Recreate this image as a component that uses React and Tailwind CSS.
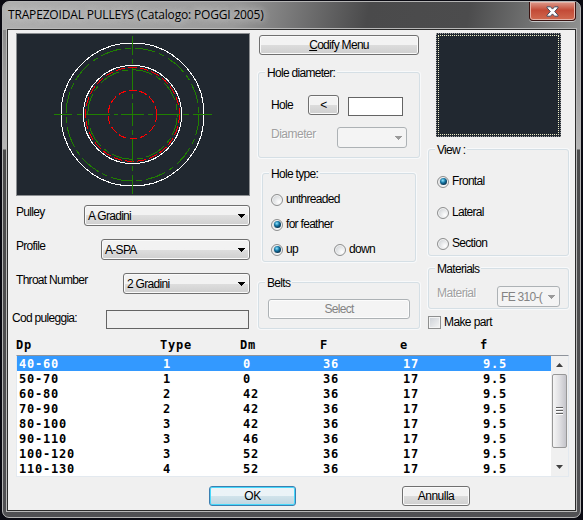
import { useState } from 'react';

const ROWS = [
  ['40-60', '1', '0', '36', '17', '9.5'],
  ['50-70', '1', '0', '36', '17', '9.5'],
  ['60-80', '2', '42', '36', '17', '9.5'],
  ['70-90', '2', '42', '36', '17', '9.5'],
  ['80-100', '3', '42', '36', '17', '9.5'],
  ['90-110', '3', '46', '36', '17', '9.5'],
  ['100-120', '3', '52', '36', '17', '9.5'],
  ['110-130', '4', '52', '36', '17', '9.5'],
];

const COLUMNS = 'grid grid-cols-[144px_80px_80px_80px_80px_1fr]';

const Group = ({ title, className, children }) => (
  <div className={`relative rounded-[3px] border border-[#d5dfe5] shadow-[0_0_0_1px_#f8f9fa] ${className}`}>
    <span className="absolute -top-[8px] left-[6px] bg-[#f0f0f0] px-[2px] leading-[17px]">{title}</span>
    {children}
  </div>
);

const Button = ({ className = '', disabled, primary, children }) => {
  let look =
    'border-[#707070] bg-linear-to-b from-[#f3f3f3] from-50% via-[#dddddd] via-50% to-[#cfcfcf] shadow-[inset_0_0_0_1px_#fafafa]';
  if (disabled) look = 'border-[#adb2b5] bg-[#f4f4f4] text-[#838383] shadow-[inset_0_0_0_1px_#fcfcfc]';
  if (primary) {
    look =
      'border-[#3c7fb1] bg-linear-to-b from-[#ebf3f7] from-50% via-[#d1e3eb] via-50% to-[#bfd6e1] shadow-[inset_0_0_0_1px_#46d8fb]';
  }
  return (
    <button
      disabled={disabled}
      className={`flex h-5 items-center justify-center rounded-[3px] border ${look} ${className}`}
    >
      {children}
    </button>
  );
};

const Select = ({ value, disabled, className }) => (
  <div
    className={`flex h-[21px] items-center justify-between rounded-[3px] border pr-1 pl-[3px] ${
      disabled
        ? 'border-[#adb2b5] bg-[#f4f4f4] text-[#838383]'
        : 'border-[#707070] bg-linear-to-b from-[#f2f2f2] from-50% via-[#dedede] via-50% to-[#cfcfcf] shadow-[inset_0_0_0_1px_#fafafa]'
    } ${className}`}
  >
    <span className="pt-px whitespace-nowrap">{value}</span>
    <svg width="7" height="4" viewBox="0 0 7 4" className="shrink-0" shapeRendering="crispEdges">
      <path d="M0 0h7L3.5 4z" fill={disabled ? '#9a9a9a' : '#000'} />
    </svg>
  </div>
);

const Radio = ({ label, checked, onChange, className = '' }) => (
  <label className={`flex h-[15px] items-center gap-[3px] ${className}`}>
    <input type="radio" checked={checked} onChange={onChange} className="sr-only" />
    <span className="flex size-3 items-center justify-center rounded-full border border-[#8e8f8f] bg-[radial-gradient(circle_at_70%_70%,#ffffff,#c4c8cc)] shadow-[inset_0_0_0_1px_#f4f4f4]">
      {checked && (
        <span className="size-[7px] rounded-full bg-[radial-gradient(circle_at_40%_35%,#7fd8f5_5%,#12719f_40%,#0a2f4a_75%)]" />
      )}
    </span>
    <span>{label}</span>
  </label>
);

const PulleyView = () => (
  <svg
    width="234"
    height="163"
    viewBox="16 33 234 163"
    fill="none"
    shapeRendering="crispEdges"
    className="bg-[#212830]"
  >
    <rect x="16.5" y="33.5" width="233" height="162" stroke="#8b8e91" />
    <circle cx="132.5" cy="114.5" r="71.5" stroke="#fff" />
    <circle cx="132.5" cy="114.5" r="66.5" stroke="#208000" strokeDasharray="21 4 6 4" />
    <circle cx="132.5" cy="114.5" r="44.7" stroke="#208000" strokeDasharray="21 4 6 4" />
    <circle cx="132.5" cy="114.5" r="49.1" stroke="#fff" />
    <circle cx="132.5" cy="114.5" r="46.9" stroke="#f00" strokeDasharray="9 3" />
    <circle cx="132.5" cy="114.5" r="24.3" stroke="#f00" strokeDasharray="8 3" />
    <path
      d="M54 114.5h18M77 114.5h5M86 114.5h24M114 114.5h4M121 114.5h23M148 114.5h5M157 114.5h23M183 114.5h6M193 114.5h19"
      stroke="#208000"
    />
    <path
      d="M132.5 36v19M132.5 59v5M132.5 68v22M132.5 94v5M132.5 103v23M132.5 130v5M132.5 139v23M132.5 166v5M132.5 175v19"
      stroke="#208000"
    />
  </svg>
);

const TitleBar = () => (
  <div className="flex h-[27px] justify-between">
    <h1 className="mt-[3px] ml-[2px] font-['Open_Sans','Noto_Sans',sans-serif] text-[12px] leading-[20px] tracking-[-0.17px] whitespace-nowrap text-black [text-shadow:0_0_6px_#ddd,0_0_10px_#bbb]">
      TRAPEZOIDAL PULLEYS (Catalogo: POGGI 2005)
    </h1>
    <button
      aria-label="Close"
      className="mr-px flex h-[19px] w-[47px] items-center justify-center rounded-b-[4px] border border-t-0 border-[#3a1210] bg-linear-to-b from-[#dc9a8c] from-0% via-[#c34a36] via-45% to-[#d06a50] shadow-[inset_0_0_0_1px_#e5b3a8,0_1px_0_#c8c8c8]"
    >
      <svg width="13" height="11" viewBox="0 0 13 11">
        <path
          d="M1 .8h3.5l2 2.3 2-2.3H12v1L8.7 5.5l3.3 3.7v1H8.500l-2-2.300-2 2.300H1v-1l3.300-3.700L1 1.800z"
          fill="#fff"
          stroke="#454d60"
          strokeWidth="1"
        />
      </svg>
    </button>
  </div>
);

const LeftPanel = () => (
  <div className="w-[242px] pt-[3px] pl-1">
    <div className="pl-1">
      <PulleyView />
      <div className="mt-[9px] flex w-[234px] flex-col gap-[13px]">
        <div className="flex justify-between">
          <span className="leading-[15px]">Pulley</span>
          <Select value="A Gradini" className="w-[166px]" />
        </div>
        <div className="flex justify-between">
          <span className="leading-[15px]">Profile</span>
          <Select value="A-SPA" className="w-[149px]" />
        </div>
        <div className="flex justify-between">
          <span className="leading-[15px]">Throat Number</span>
          <Select value="2 Gradini" className="w-[127px]" />
        </div>
      </div>
    </div>
    <div className="mt-4 flex w-[237px] justify-between">
      <span className="leading-[17px]">Cod puleggia:</span>
      <input readOnly className="h-[19px] w-[143px] border border-[#646464]" />
    </div>
  </div>
);

const HolePanel = () => {
  const [feather, setFeather] = useState(true);
  const [up, setUp] = useState(true);

  return (
    <div className="w-[162px] pt-[5px]">
      <Button className="mx-px w-40">
        <span>
          <u>C</u>odify Menu
        </span>
      </Button>

      <Group title="Hole diameter:" className="mt-[17px] h-[86px] pt-[22px] pl-3">
        <div className="flex">
          <span className="w-[37px] leading-[20px]">Hole</span>
          <Button className="w-[31px]">&lt;</Button>
          <input className="mt-[2px] ml-[9px] h-[19px] w-[55px] border border-[#646464] bg-white" />
        </div>
        <div className="mt-[11px] flex">
          <span className="w-[66px] leading-[15px] tracking-[-0.5px] text-[#a0a0a0] [text-shadow:1px_1px_0_#fff]">
            Diameter
          </span>
          <Select value="" disabled className="w-[70px]" />
        </div>
      </Group>

      <Group title="Hole type:" className="mx-1 mt-[15px] h-[89px] pt-[18px] pl-2">
        <div className="flex flex-col gap-[10px]">
          <Radio label="unthreaded" checked={!feather} onChange={() => setFeather(false)} />
          <Radio label="for feather" checked={feather} onChange={() => setFeather(true)} />
          <div className="flex">
            <Radio label="up" checked={up} onChange={() => setUp(true)} className="w-[63px]" />
            <Radio label="down" checked={!up} onChange={() => setUp(false)} />
          </div>
        </div>
      </Group>

      <Group title="Belts" className="mt-5 h-[47px] pt-4 pl-[9px]">
        <Button disabled className="w-[142px]">
          Select
        </Button>
      </Group>
    </div>
  );
};

const ViewPanel = () => {
  const [view, setView] = useState('Frontal');

  return (
    <div className="ml-2 w-[141px] pt-[3px]">
      <div className="ml-2 h-[104px] w-[125px] border border-dotted border-[#a0a0a0] bg-[#212830] p-px">
        <div className="h-full border border-dotted border-[#f0f0c8]" />
      </div>

      <Group title="View :" className="mt-3 h-[107px] pt-6 pl-2">
        <div className="flex flex-col gap-4">
          {['Frontal', 'Lateral', 'Section'].map((name) => (
            <Radio key={name} label={name} checked={view === name} onChange={() => setView(name)} />
          ))}
        </div>
      </Group>

      <Group title="Materials" className="mt-3 flex h-[41px] pt-[17px] pl-2">
        <span className="w-[60px] leading-[15px] tracking-[-0.5px] text-[#a0a0a0] [text-shadow:1px_1px_0_#fff]">
          Material
        </span>
        <Select value="FE 310-(" disabled className="w-[63px]" />
      </Group>

      <label className="mt-[7px] flex h-[13px] items-center gap-[3px]">
        <input type="checkbox" className="sr-only" />
        <span className="size-[13px] border border-[#8e8f8f] bg-linear-to-br from-[#cbcfd5] to-[#f6f6f6] shadow-[inset_0_0_0_1px_#f4f4f4]" />
        <span className="tracking-[-0.6px]">Make part</span>
      </label>
    </div>
  );
};

const ScrollBar = () => (
  <div className="flex w-[17px] flex-col items-center bg-[#f0f0f0] py-[7px]">
    <svg width="7" height="4" viewBox="0 0 7 4">
      <path d="M0 4h7L3.500 0z" fill="#404040" />
    </svg>
    <div className="mt-[7px] flex h-[74px] w-[15px] flex-col items-center justify-center gap-px rounded-[2px] border border-[#979797] bg-linear-to-r from-[#f5f5f5] via-[#e0e0e3] to-[#c4c4ca]">
      <span className="h-[2px] w-[7px] border-b border-white bg-[#606060]" />
      <span className="h-[2px] w-[7px] border-b border-white bg-[#606060]" />
      <span className="h-[2px] w-[7px] border-b border-white bg-[#606060]" />
    </div>
    <svg width="7" height="4" viewBox="0 0 7 4" className="mt-auto">
      <path d="M0 0h7L3.500 4z" fill="#404040" />
    </svg>
  </div>
);

const PulleyTable = () => {
  const [selected, setSelected] = useState(0);

  return (
    <div className="mt-[7px] ml-2 w-[553px] font-['DejaVu_Sans_Mono',monospace] text-[12px] leading-[15px] font-bold tracking-[0.776px]">
      <div className={`${COLUMNS} h-[18px] leading-[17px]`}>
        <span>Dp</span>
        <span>Type</span>
        <span>Dm</span>
        <span>F</span>
        <span>e</span>
        <span>f</span>
      </div>
      <div className="flex h-[122px] border border-[#e3e9ef] border-t-[#8e939b] bg-white">
        <div className="flex-1">
          {ROWS.map((row, i) => (
            <div
              key={row[0]}
              onClick={() => setSelected(i)}
              className={`${COLUMNS} h-[15px] pl-[2px] leading-[16px] ${i === selected ? 'bg-[#3399ff] text-white' : ''}`}
            >
              {row.map((cell, j) => (
                <span key={j}>{cell}</span>
              ))}
            </div>
          ))}
        </div>
        <ScrollBar />
      </div>
    </div>
  );
};

export default function App() {
  return (
    <div className="h-[520px] w-[583px] overflow-hidden bg-[#0a0a12] px-[2px] pt-px pb-[2px] font-['Liberation_Sans',Arial,sans-serif] text-[12px] leading-[15px] tracking-[-0.7px] text-black">
      <div className="h-[517px] rounded-[7px] border border-[#b4b4b4] bg-[linear-gradient(to_bottom,transparent_28px,#8c8c8c_28px,#b5b5b5_147px,#4a4a4a_148px,#505053_100%),linear-gradient(100deg,#b0b0b0_0%,#9a9a9a_35%,#4a4a4b_55%,#4c4c4d_70%,#8f908f_87%,#959595_100%)] px-[3px]">
        <TitleBar />
        <div className="-mt-px h-[484px] w-[571px] border border-[#b8b8b8]">
          <div className="h-[482px] border border-[#2c2c2c] bg-[#f0f0f0]">
            <div className="flex h-[300px]">
              <LeftPanel />
              <div className="ml-2 flex">
                <HolePanel />
                <ViewPanel />
              </div>
            </div>
            <PulleyTable />
            <div className="mt-[9px] flex pl-[201px] tracking-[-0.5px]">
              <Button primary className="w-[87px]">
                OK
              </Button>
              <Button className="ml-[106px] w-[68px]">Annulla</Button>
            </div>
          </div>
        </div>
      </div>
    </div>
  );
}
